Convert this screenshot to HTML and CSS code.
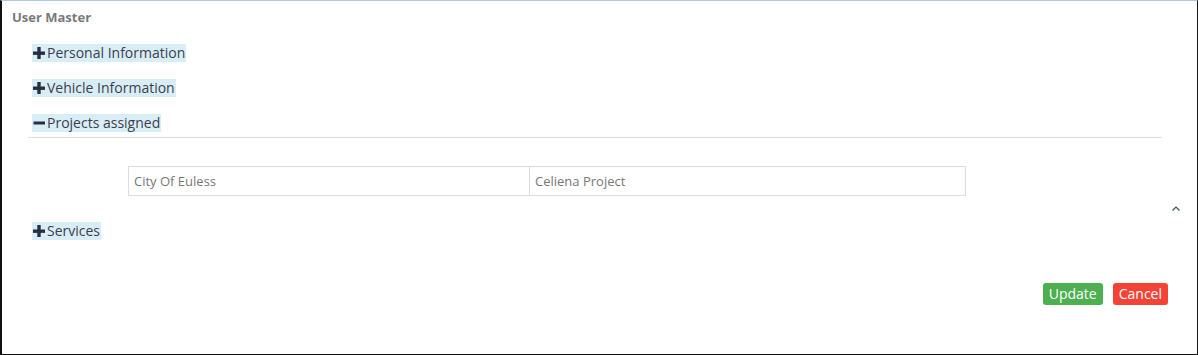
FILE: index.html
```html
<!DOCTYPE html>
<html>
<head>
<meta charset="utf-8">
<link rel="stylesheet" href="styles.css">
</head>
<body>
<div class="page">
  <div class="title">User Master</div>
  <div class="sections">
    <div class="sec-head"><span class="label"><svg class="ico" viewBox="0 0 12 12"><rect x="0" y="4.5" width="12" height="3.4"/><rect x="4.3" y="0" width="3.4" height="12"/></svg>Personal Information</span></div>
    <div class="sec-head"><span class="label"><svg class="ico" viewBox="0 0 12 12"><rect x="0" y="4.5" width="12" height="3.4"/><rect x="4.3" y="0" width="3.4" height="12"/></svg>Vehicle Information</span></div>
    <div class="sec-head open"><span class="label"><svg class="ico" viewBox="0 0 12 12"><rect x="0.5" y="4.5" width="11.5" height="3"/></svg>Projects assigned</span></div>
    <div class="sec-body">
      <table class="grid">
        <tr><td class="c1">City Of Euless</td><td class="c2">Celiena Project</td></tr>
      </table>
    </div>
    <div class="sec-head"><span class="label"><svg class="ico" viewBox="0 0 12 12"><rect x="0" y="4.5" width="12" height="3.4"/><rect x="4.3" y="0" width="3.4" height="12"/></svg>Services</span></div>
  </div>
  <svg class="caret" viewBox="0 0 8 5"><polyline points="0.5,4.5 4,1 7.5,4.5" fill="none" stroke="#3d4d66" stroke-width="1.2"/></svg>
  <div class="actions">
    <button class="btn btn-update">Update</button>
    <button class="btn btn-cancel">Cancel</button>
  </div>
</div>
</body>
</html>
```

FILE: styles.css
```css
html, body {
  margin: 0;
  padding: 0;
  background: #fff;
}
.page {
  position: relative;
  box-sizing: border-box;
  width: 1198px;
  height: 355px;
  border-left: 2px solid #111;
  border-right: 1px solid #111;
  border-bottom: 1px solid #111;
  border-top: 1px solid #a9c9ea;
  padding: 7px 0 0 10px;
  font-family: "Open Sans", "Noto Sans", sans-serif;
}
.title {
  font-size: 13px;
  font-weight: bold;
  color: #7a7a7a;
  line-height: 18px;
  margin-bottom: 10px;
}
.sections {
  margin-left: 16px;
  width: 1134px;
}
.sec-head {
  display: flex;
  padding: 8px 4px 9px;
  height: 18px;
  font-size: 14px;
  color: #3b3f4c;
}
.sec-head.open {
  padding-bottom: 5px;
  border-bottom: 1px solid #dcdcdc;
}
.label {
  display: flex;
  align-items: center;
  background: #d9edf7;
  height: 18px;
  line-height: 18px;
  padding-right: 1px;
}
.ico {
  width: 12px;
  height: 12px;
  fill: #263040;
  margin: 0 2px 0 1px;
}
.sec-body {
  padding: 28px 0 18px 100px;
}
.grid {
  border-collapse: collapse;
  width: 838px;
  font-size: 13px;
  color: #777;
}
.grid td {
  border: 1px solid #dcdcdc;
  height: 28px;
  padding: 0 5px;
}
.grid .c1 {
  width: 390px;
}
.caret {
  position: absolute;
  left: 1170px;
  top: 205px;
  width: 8px;
  height: 5px;
}
.actions {
  display: flex;
  justify-content: flex-end;
  gap: 10px;
  padding-right: 29px;
  margin-top: 34px;
}
.btn {
  font-family: "Open Sans", "Noto Sans", sans-serif;
  font-size: 14px;
  color: #fff;
  border: none;
  border-radius: 3px;
  height: 22px;
  padding: 0 6px;
  line-height: 22px;
}
.btn-update {
  background: #4caf50;
}
.btn-cancel {
  background: #f44336;
}
```
